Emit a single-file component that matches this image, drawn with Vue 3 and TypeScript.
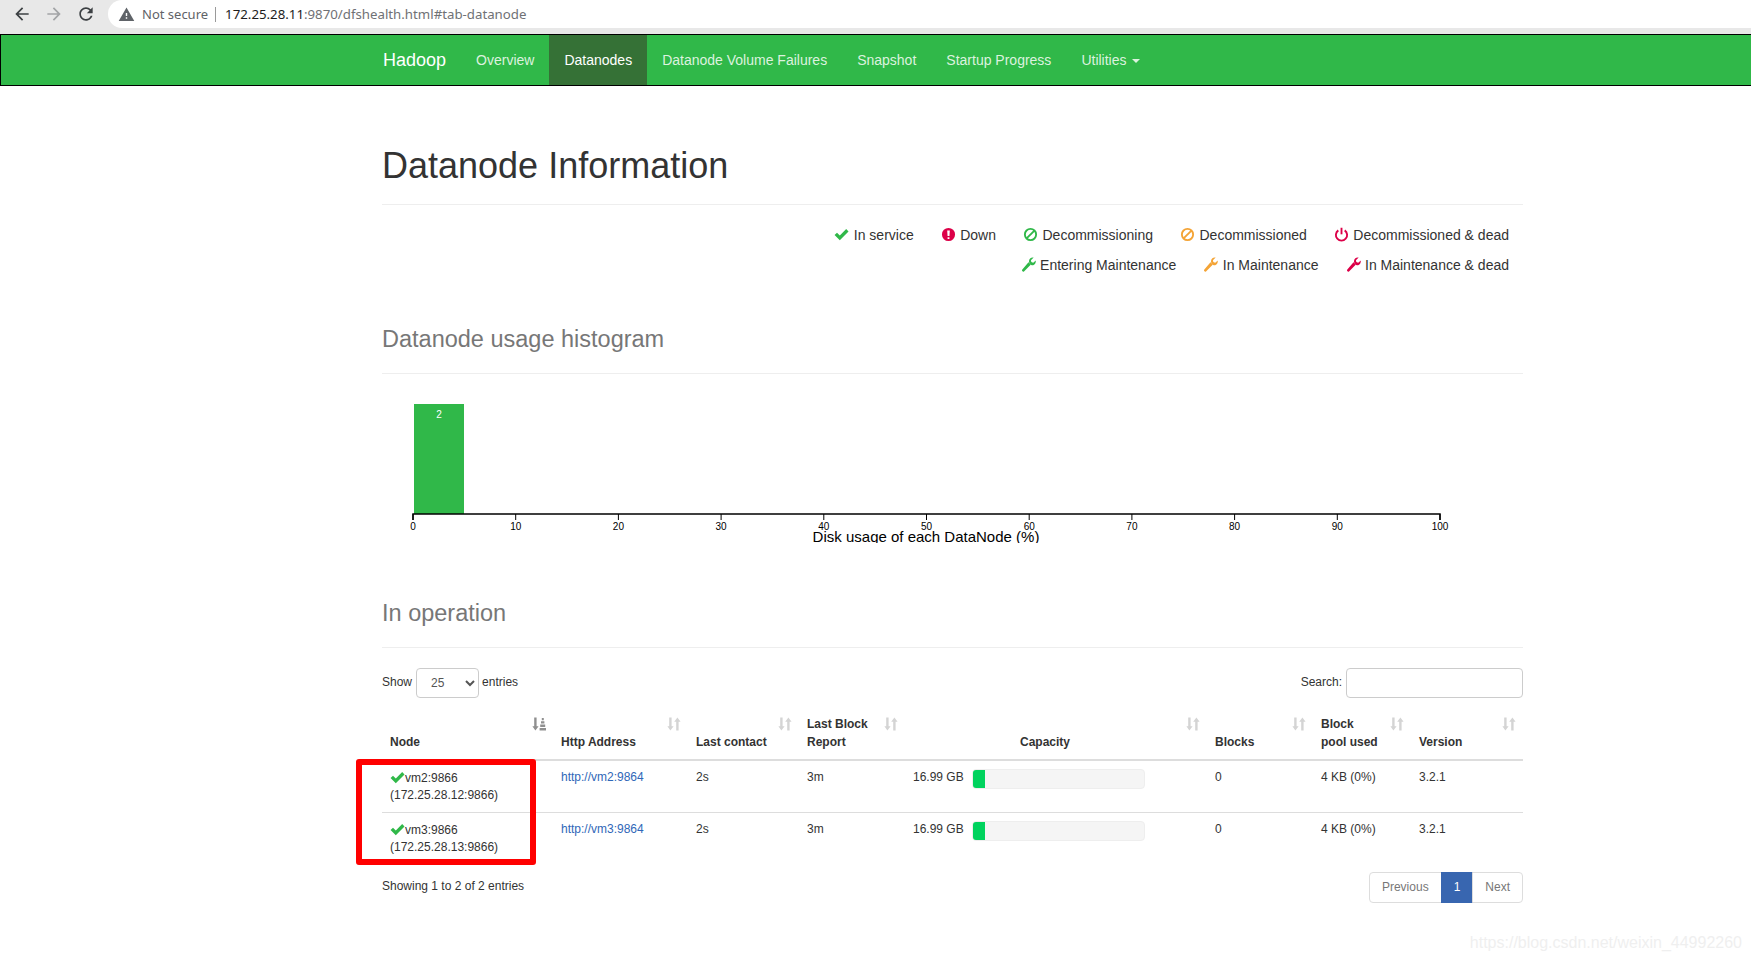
<script setup lang="ts">
interface Legend { label: string; icon: string; color: string }
const legendRows: Legend[][] = [
  [
    { label: 'In service', icon: 'check', color: 'green' },
    { label: 'Down', icon: 'down', color: 'red' },
    { label: 'Decommissioning', icon: 'ban', color: 'green' },
    { label: 'Decommissioned', icon: 'ban', color: 'orange' },
    { label: 'Decommissioned & dead', icon: 'power', color: 'red' },
  ],
  [
    { label: 'Entering Maintenance', icon: 'wrench', color: 'green' },
    { label: 'In Maintenance', icon: 'wrench', color: 'orange' },
    { label: 'In Maintenance & dead', icon: 'wrench', color: 'red' },
  ],
]
const navItems = ['Overview', 'Datanodes', 'Datanode Volume Failures', 'Snapshot', 'Startup Progress']
const ticks = [0, 10, 20, 30, 40, 50, 60, 70, 80, 90, 100]
const tickX = (t: number): number => 31 + t * 10.27
const columns: { title: string[]; center?: boolean; width: number }[] = [
  { title: ['Node'], width: 171 },
  { title: ['Http Address'], width: 135 },
  { title: ['Last contact'], width: 111 },
  { title: ['Last Block', 'Report'], width: 106 },
  { title: ['Capacity'], center: true, width: 302 },
  { title: ['Blocks'], width: 106 },
  { title: ['Block', 'pool used'], width: 98 },
  { title: ['Version'], width: 112 },
]
const rows = [
  { name: 'vm2:9866', ip: '(172.25.28.12:9866)', url: 'http://vm2:9864' },
  { name: 'vm3:9866', ip: '(172.25.28.13:9866)', url: 'http://vm3:9864' },
]
</script>

<template>
  <div class="page">
    <div class="chrome">
      <svg class="tool" viewBox="0 0 24 24"><path fill="#3c4043" d="M20 11H7.83l5.59-5.59L12 4l-8 8 8 8 1.41-1.41L7.83 13H20v-2z" /></svg>
      <svg class="tool" viewBox="0 0 24 24"><path fill="#a2a4a6" d="M4 11h12.17l-5.59-5.59L12 4l8 8-8 8-1.41-1.41L16.17 13H4v-2z" /></svg>
      <svg class="tool" viewBox="0 0 24 24"><path fill="#3c4043" d="M17.65 6.35C16.2 4.9 14.21 4 12 4c-4.42 0-7.99 3.58-7.99 8s3.57 8 7.99 8c3.73 0 6.84-2.55 7.73-6h-2.08c-.82 2.33-3.04 4-5.65 4-3.31 0-6-2.69-6-6s2.69-6 6-6c1.66 0 3.14.69 4.22 1.78L13 11h7V4l-2.35 2.35z" /></svg>
      <div class="omnibox">
        <svg class="warn" viewBox="0 0 24 24"><path fill="#5f6368" d="M1 21h22L12 2 1 21zm12-3h-2v-2h2v2zm0-4h-2v-4h2v4z" /></svg>
        <span class="secure">Not secure</span>
        <span class="sep"></span>
        <span class="url"><b>172.25.28.11</b>:9870/dfshealth.html#tab-datanode</span>
      </div>
    </div>

    <nav class="navbar">
      <a class="brand">Hadoop</a>
      <a v-for="item in navItems" :key="item" class="nav-item" :class="{ active: item === 'Datanodes' }">{{ item }}</a>
      <a class="nav-item">Utilities <span class="caret"></span></a>
    </nav>

    <main class="container">
      <h1 class="page-header">Datanode Information</h1>

      <div class="legend">
        <div v-for="(row, r) in legendRows" :key="r" class="legend-row">
          <span v-for="item in row" :key="item.label" class="legend-item">
            <svg class="glyph" :class="item.color" viewBox="0 0 16 16">
              <path v-if="item.icon === 'check'" fill="currentColor" d="M.6 8.6l2.6-2.6 3 3L13 2.2l2.5 2.5-9.3 9.3z" />
              <path v-else-if="item.icon === 'down'" fill="currentColor" fill-rule="evenodd" d="M8 1a7 7 0 1 1 0 14A7 7 0 0 1 8 1zM6.6 3.6l.4 6h2l.4-6zM7 10.8v2h2v-2z" />
              <g v-else-if="item.icon === 'ban'" fill="none" stroke="currentColor" stroke-width="2">
                <circle cx="8" cy="8" r="6" />
                <path d="M3.8 12.2l8.4-8.4" />
              </g>
              <g v-else-if="item.icon === 'power'" fill="none" stroke="currentColor" stroke-width="2">
                <path d="M4.6 3.6a6 6 0 1 0 6.8 0" />
                <path d="M8 .8v7" />
              </g>
              <g v-else fill="currentColor">
                <path d="M1.2 13.6l6.8-8 2.6 2.4-7.4 7.4a1.4 1.4 0 0 1-2-1.8z" />
                <path d="M13.5.6C11 0 8.5 1.8 8.5 4.5c0 .8.2 1.4.5 2l1.8 1.9c.8.3 1.5.4 2.2.3 2-.5 3-2.7 2.8-4.9L13 6l-2-.6-.4-2z" />
              </g>
            </svg>
            <span>{{ item.label }}</span>
          </span>
        </div>
      </div>

      <h2 class="section-title">Datanode usage histogram</h2>
      <svg class="histogram" width="1140" height="169" viewBox="0 0 1140 169">
        <rect x="32" y="30" width="50" height="110" fill="#30b849" />
        <text x="57" y="44" class="bar-label" text-anchor="middle">2</text>
        <path d="M31 146V140H1058V146" fill="none" stroke="#000" stroke-width="1.5" />
        <g v-for="t in ticks" :key="t">
          <line :x1="tickX(t)" y1="140" :x2="tickX(t)" y2="146" stroke="#000" />
          <text :x="tickX(t)" y="156" class="tick" text-anchor="middle">{{ t }}</text>
        </g>
        <text x="544" y="168" class="axis-label" text-anchor="middle">Disk usage of each DataNode (%)</text>
      </svg>

      <h2 class="section-title second">In operation</h2>

      <div class="controls">
        <label class="control">Show
          <select class="entries"><option>25</option></select>
          entries</label>
        <label class="control">Search: <input class="search" type="text" /></label>
      </div>

      <div class="table-wrap">
        <table class="nodes">
          <colgroup>
            <col v-for="(c, i) in columns" :key="i" :style="{ width: c.width + 'px' }" />
          </colgroup>
          <thead>
            <tr>
              <th v-for="(c, i) in columns" :key="i" :class="{ center: c.center }">
                <template v-for="(line, l) in c.title" :key="l">{{ line }}<br v-if="l < c.title.length - 1" /></template>
                <svg class="sort" :class="{ sorted: i === 0 }" viewBox="0 0 14 14">
                  <path fill="currentColor" d="M2.2 .6h2.4v8.6h2L3.4 13.6.4 9.2h1.8z" />
                  <path v-if="i !== 0" fill="currentColor" d="M9.2 13.4V4.8h-2L10.4.4l3.2 4.4h-2v8.6z" />
                  <path v-else fill="currentColor" d="M7.6 11h6.4v2.4H7.6zM8.2 7.6h5v2.4h-5zM9 4.2h3.4v2.4H9zM9.8 1h2v2.2h-2z" />
                </svg>
              </th>
            </tr>
          </thead>
          <tbody>
            <tr v-for="row in rows" :key="row.name">
              <td class="node-cell">
                <svg class="row-check" viewBox="0 0 16 16"><path fill="#30b849" d="M.6 8.6l2.6-2.6 3 3L13 2.2l2.5 2.5-9.3 9.3z" /></svg>{{ row.name }}<br />{{ row.ip }}
              </td>
              <td><a class="link">{{ row.url }}</a></td>
              <td>2s</td>
              <td>3m</td>
              <td>
                <div class="capacity">
                  <span class="cap-text">16.99 GB</span>
                  <div class="progress"><div class="progress-bar" :style="{ width: '7%' }"></div></div>
                </div>
              </td>
              <td>0</td>
              <td>4 KB (0%)</td>
              <td>3.2.1</td>
            </tr>
          </tbody>
        </table>
        <div class="highlight"></div>
      </div>

      <div class="table-footer">
        <span class="info">Showing 1 to 2 of 2 entries</span>
        <div class="pagination">
          <a class="page-btn first">Previous</a>
          <a class="page-btn current">1</a>
          <a class="page-btn last">Next</a>
        </div>
      </div>
    </main>

    <div class="watermark">https://blog.csdn.net/weixin_44992260</div>
  </div>
</template>

<style scoped>
.page {
  position: relative;
  width: 1751px;
  height: 962px;
  overflow: hidden;
  background: #fff;
  color: #333;
  font-family: "Liberation Sans", Arial, sans-serif;
  font-size: 14px;
  line-height: 20px;
}
.chrome {
  display: flex;
  align-items: flex-start;
  height: 34px;
  padding-left: 12px;
  background: #e8e8e8;
  box-sizing: border-box;
}
.tool {
  width: 20px;
  height: 20px;
  margin-top: 4px;
  margin-right: 12px;
  flex: none;
}
.omnibox {
  display: flex;
  align-items: center;
  flex: 1;
  height: 28px;
  padding-left: 10px;
  background: #fff;
  border-radius: 14px 0 0 14px;
  font-family: "Noto Sans", sans-serif;
  font-size: 13px;
}
.warn {
  width: 17px;
  height: 17px;
  margin-right: 7px;
}
.secure {
  color: #5f6368;
}
.sep {
  width: 1px;
  height: 15px;
  margin: 0 9px 0 7px;
  background: #9a9a9a;
}
.url {
  color: #6f7175;
  font-size: 13.25px;
}
.url b {
  font-weight: 400;
  color: #1d1d1d;
}
.navbar {
  display: flex;
  align-items: stretch;
  height: 50px;
  padding-left: 382px;
  background: #30b849;
  border: 1px solid #000;
  box-sizing: content-box;
  margin-right: -2px;
}
.brand {
  padding: 15px 15px 15px 0;
  color: #fff;
  font-size: 18px;
}
.nav-item {
  padding: 15px;
  color: #dcf2df;
}
.nav-item.active {
  background: #357136;
  color: #fff;
}
.caret {
  display: inline-block;
  width: 0;
  height: 0;
  margin-left: 2px;
  vertical-align: middle;
  border-top: 4px solid #dcf2df;
  border-left: 4px solid transparent;
  border-right: 4px solid transparent;
}
.container {
  width: 1141px;
  margin-left: 382px;
}
.page-header {
  margin: 60px 0 0;
  padding-bottom: 18px;
  border-bottom: 1px solid #eee;
  color: #333;
  font-size: 36px;
  font-weight: 500;
  line-height: 40px;
}
.legend {
  margin-top: 15px;
  padding-right: 14px;
}
.legend-row {
  display: flex;
  justify-content: flex-end;
  gap: 27px;
  height: 30px;
  align-items: center;
}
.legend-item {
  display: inline-flex;
  align-items: center;
  gap: 4.5px;
  color: #333;
}
.glyph {
  width: 15px;
  height: 15px;
  transform: translateY(-1px);
}
.green { color: #30b849; }
.red { color: #dc0048; }
.orange { color: #f4a436; }
.section-title {
  margin: 46px 0 0;
  padding-bottom: 21px;
  border-bottom: 1px solid #eee;
  color: #777;
  font-size: 23.5px;
  font-weight: 500;
  line-height: 26px;
}
.section-title.second {
  margin-top: 57px;
}
.histogram {
  display: block;
  font-family: "Liberation Sans", Arial, sans-serif;
}
.bar-label {
  fill: #fff;
  font-size: 10px;
}
.tick {
  fill: #000;
  font-size: 10px;
}
.axis-label {
  fill: #000;
  font-size: 15px;
}
.controls {
  display: flex;
  justify-content: space-between;
  margin-top: 20px;
  font-size: 12px;
}
.control {
  display: flex;
  align-items: flex-start;
  gap: 4px;
  height: 30px;
  line-height: 28px;
  font-weight: 400;
}
.entries {
  width: 63px;
  height: 30px;
  margin-right: -1px;
  padding: 5px 10px;
  border: 1px solid #ccc;
  border-radius: 4px;
  background: #fff;
  color: #555;
  font-family: inherit;
  font-size: 12px;
  box-sizing: border-box;
}
.search {
  width: 177px;
  height: 30px;
  padding: 5px 10px;
  border: 1px solid #ccc;
  border-radius: 4px;
  box-sizing: border-box;
}
.table-wrap {
  position: relative;
  margin-top: 9px;
}
.nodes {
  width: 1141px;
  table-layout: fixed;
  border-collapse: separate;
  border-spacing: 0;
  font-size: 12px;
  line-height: 17px;
}
.nodes th {
  position: relative;
  height: 36px;
  padding: 8px;
  vertical-align: bottom;
  text-align: left;
  font-weight: 700;
  line-height: 18px;
  border-bottom: 2px solid #ddd;
}
.nodes th.center {
  padding-right: 30px;
  text-align: center;
}
.sort {
  position: absolute;
  top: 10px;
  right: 7px;
  width: 14px;
  height: 14px;
  color: #d4d4d4;
}
.sort.sorted {
  color: #8f8f8f;
}
.nodes td {
  height: 35px;
  padding: 8px;
  vertical-align: top;
  border-bottom: 1px solid #ddd;
}
.nodes td.node-cell {
  padding-top: 9px;
  padding-bottom: 7px;
}
.nodes tbody tr:last-child td {
  border-bottom: 0;
  height: 36px;
}
.row-check {
  width: 15px;
  height: 15px;
  margin-block: -2px;
  vertical-align: -1px;
}
.link {
  color: #2f67b8;
}
.capacity {
  display: flex;
  align-items: flex-start;
  gap: 9px;
}
.cap-text {
  width: 50px;
  flex: none;
  white-space: nowrap;
}
.progress {
  width: 173px;
  height: 20px;
  border: 1px solid #eee;
  border-radius: 4px;
  background: #f5f5f5;
  overflow: hidden;
  box-sizing: border-box;
}
.progress-bar {
  height: 100%;
  background: #00d35e;
}
.highlight {
  position: absolute;
  left: -26px;
  top: 52px;
  width: 180px;
  height: 106px;
  border: 6px solid #f00;
  border-radius: 3px;
  box-sizing: border-box;
}
.table-footer {
  display: flex;
  justify-content: space-between;
  align-items: flex-start;
  margin-top: 7px;
  font-size: 12px;
  line-height: 17px;
}
.info {
  margin-top: 6px;
}
.pagination {
  display: flex;
}
.page-btn {
  padding: 6px 12px;
  border: 1px solid #ddd;
  margin-left: -1px;
  color: #777;
  background: #fff;
}
.page-btn.first {
  border-radius: 4px 0 0 4px;
}
.page-btn.last {
  border-radius: 0 4px 4px 0;
}
.page-btn.current {
  background: #3866b0;
  border-color: #3866b0;
  color: #fff;
}
.watermark {
  position: absolute;
  right: 9px;
  top: 933px;
  color: #efefef;
  font-size: 16px;
}
</style>
